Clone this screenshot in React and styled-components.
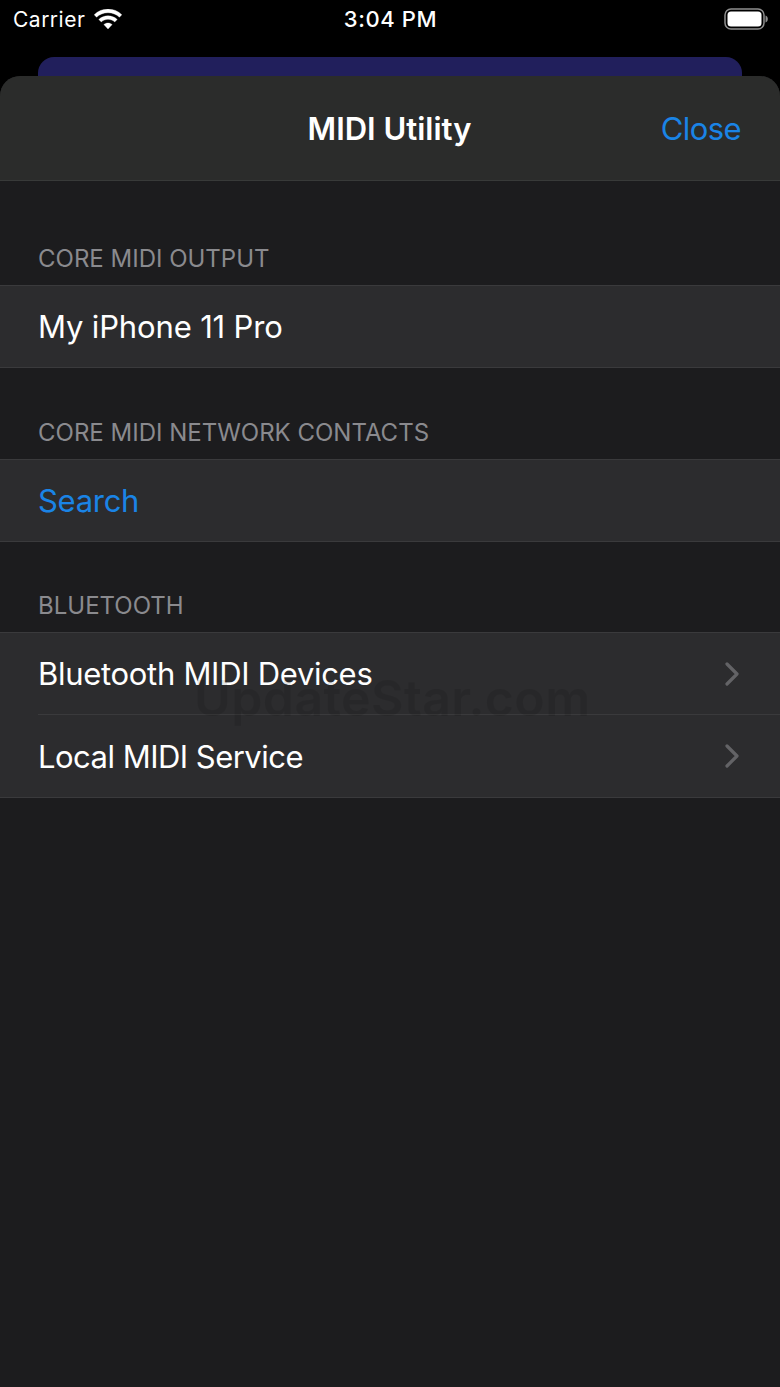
import React from 'react';
import styled, { createGlobalStyle } from 'styled-components';

const GlobalStyle = createGlobalStyle`
  html, body {
    margin: 0;
    padding: 0;
    background: #000;
  }
  body {
    font-family: Inter, "Liberation Sans", sans-serif;
  }
`;

const Screen = styled.div`
  width: 780px;
  height: 1387px;
  background: #000;
  overflow: hidden;
  position: relative;
  display: flex;
  flex-direction: column;
`;

const StatusBar = styled.div`
  height: 38px;
  padding: 0 12px 0 13px;
  display: grid;
  grid-template-columns: 1fr auto 1fr;
  align-items: center;
  color: #fff;
`;

const StatusLeft = styled.div`
  display: flex;
  align-items: center;
  gap: 9px;
  font-size: 21px;
  letter-spacing: 0.5px;
`;

const Clock = styled.div`
  font-size: 22px;
  font-weight: 500;
  letter-spacing: 0.6px;
`;

const StatusRight = styled.div`
  display: flex;
  justify-content: flex-end;
`;

const BackCard = styled.div`
  height: 19px;
  margin: 19px 38px 0;
  background: #211f5c;
  border-radius: 16px 16px 0 0;
`;

const Sheet = styled.div`
  flex: 1;
  background: #1c1c1e;
  border-radius: 20px 20px 0 0;
  overflow: hidden;
`;

const NavBar = styled.div`
  height: 105px;
  box-sizing: border-box;
  background: #2b2c2b;
  border-bottom: 1px solid #383a39;
  padding: 0 39px 0 38px;
  display: grid;
  grid-template-columns: 1fr auto 1fr;
  align-items: center;
`;

const NavTitle = styled.div`
  color: #fff;
  font-size: 31px;
  font-weight: 600;
`;

const NavAction = styled.div`
  justify-self: end;
  color: #1a84e6;
  font-size: 31px;
  letter-spacing: -0.6px;
`;

const SectionHeader = styled.div`
  height: ${(p) => p.$height}px;
  box-sizing: border-box;
  padding: 0 38px 12px;
  display: flex;
  align-items: flex-end;
  color: #8a8a8e;
  font-size: 24px;
`;

const Group = styled.div`
  background: #2c2c2e;
  border-top: 1px solid #3a3a3c;
  border-bottom: 1px solid #3a3a3c;
`;

const Row = styled.div`
  height: 81px;
  box-sizing: border-box;
  margin-left: 38px;
  padding-right: 41px;
  display: flex;
  align-items: center;
  justify-content: space-between;
  color: ${(p) => (p.$accent ? '#1a84e6' : '#fff')};
  font-size: 31px;
  letter-spacing: ${(p) => p.$tracking ?? -0.3}px;
  & + & {
    height: 83px;
    border-top: 1px solid #3a3a3c;
  }
`;

const Watermark = styled.div`
  position: absolute;
  left: 194px;
  top: 668px;
  color: rgba(0, 0, 0, 0.1);
  font-size: 50px;
  font-weight: 600;
  letter-spacing: 0.4px;
  pointer-events: none;
`;

const WifiIcon = () => (
  <svg width="28" height="20" viewBox="1.700 1.300 24.600 17.800" fill="#fff" stroke="#fff" strokeWidth="0.300">
    <path d="M14 4.600c3.900 0 7.500 1.500 10.200 4l2.100-2.200C23 3.200 18.700 1.300 14 1.300S5 3.200 1.700 6.400l2.100 2.200c2.700-2.500 6.300-4 10.200-4z" />
    <path d="M14 10.500c2.300 0 4.400.9 6 2.300l2.200-2.200c-2.200-2-5.100-3.200-8.200-3.200s-6 1.200-8.200 3.200L8 12.800c1.600-1.400 3.700-2.300 6-2.300z" />
    <path d="M14 13.800c-1.400 0-2.700.5-3.700 1.400l3.700 3.900 3.700-3.900c-1-.9-2.300-1.400-3.700-1.400z" />
  </svg>
);

const BatteryIcon = () => (
  <svg width="44" height="22" viewBox="0 0 44 22">
    <rect x="1" y="1" width="39" height="20" rx="6" fill="none" stroke="#8e8e8e" strokeWidth="1.500" />
    <rect x="3.500" y="3.500" width="34" height="15" rx="3.500" fill="#fff" />
    <path d="M41.500 7.500c1.400.5 2.300 1.900 2.300 3.500s-.9 3-2.300 3.500z" fill="#8e8e8e" />
  </svg>
);

const Chevron = () => (
  <svg width="14" height="24" viewBox="0 0 14 24" fill="none">
    <path d="M2 2l10 10L2 22" stroke="#636366" strokeWidth="3.200" strokeLinecap="round" strokeLinejoin="round" />
  </svg>
);

const App = () => (
  <Screen>
    <GlobalStyle />
    <StatusBar>
      <StatusLeft>
        Carrier
        <WifiIcon />
      </StatusLeft>
      <Clock>3:04 PM</Clock>
      <StatusRight>
        <BatteryIcon />
      </StatusRight>
    </StatusBar>
    <BackCard />
    <Sheet>
      <NavBar>
        <span />
        <NavTitle>MIDI Utility</NavTitle>
        <NavAction>Close</NavAction>
      </NavBar>
      <SectionHeader $height={104}>CORE MIDI OUTPUT</SectionHeader>
      <Group>
        <Row $tracking={-0.15}>My iPhone 11 Pro</Row>
      </Group>
      <SectionHeader $height={91}>CORE MIDI NETWORK CONTACTS</SectionHeader>
      <Group>
        <Row $accent>Search</Row>
      </Group>
      <SectionHeader $height={90}>BLUETOOTH</SectionHeader>
      <Group>
        <Row>
          Bluetooth MIDI Devices
          <Chevron />
        </Row>
        <Row $tracking={-0.52}>
          Local MIDI Service
          <Chevron />
        </Row>
      </Group>
    </Sheet>
    <Watermark>UpdateStar.com</Watermark>
  </Screen>
);

export default App;
